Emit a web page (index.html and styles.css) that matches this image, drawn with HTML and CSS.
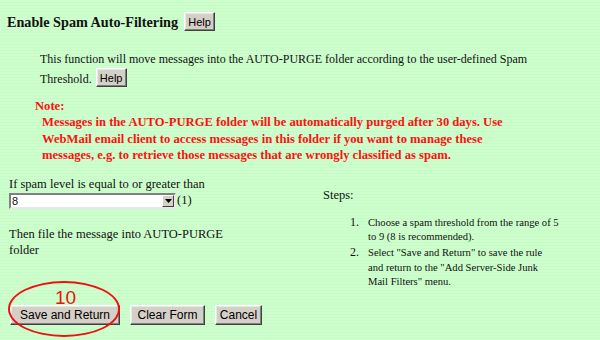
FILE: index.html
```html
<!DOCTYPE html>
<html>
<head>
<meta charset="utf-8">
<link rel="stylesheet" href="styles.css">
</head>
<body>
<div class="page">
  <div class="title-row">
    <h1 class="title">Enable Spam Auto-Filtering</h1>
    <button class="btn btn-help">Help</button>
  </div>
  <p class="intro">This function will move messages into the AUTO-PURGE folder according to the user-defined Spam<br>Threshold. <button class="btn btn-help">Help</button></p>
  <div class="note">
    <div class="note-label">Note:</div>
    <div class="note-body">Messages in the AUTO-PURGE folder will be automatically purged after 30 days. Use<br>WebMail email client to access messages in this folder if you want to manage these<br>messages, e.g. to retrieve those messages that are wrongly classified as spam.</div>
  </div>
  <div class="form-cols">
    <div class="left">
      <div class="cond">If spam level is equal to or greater than</div>
      <div class="select-row">
        <div class="select"><span class="select-val">8</span><span class="select-arrow"><svg width="7" height="4" viewBox="0 0 7 4"><path d="M0 0h7L3.5 4z" fill="#000"/></svg></span></div>
        <span class="ref">(1)</span>
      </div>
      <div class="then">Then file the message into AUTO-PURGE<br>folder</div>
    </div>
    <div class="right">
      <div class="steps-label">Steps:</div>
      <ol class="steps">
        <li>Choose a spam threshold from the range of 5<br>to 9 (8 is recommended).</li>
        <li>Select "Save and Return" to save the rule<br>and return to the "Add Server-Side Junk<br>Mail Filters" menu.</li>
      </ol>
    </div>
  </div>
  <div class="actions">
    <div class="annot-wrap">
      <button class="btn btn-action btn-save">Save and Return</button>
      <div class="annot"><span class="annot-num">10</span></div>
    </div>
    <button class="btn btn-action btn-clear">Clear Form</button>
    <button class="btn btn-action btn-cancel">Cancel</button>
  </div>
</div>
</body>
</html>
```

FILE: styles.css
```css
html, body {
  margin: 0;
  padding: 0;
}
body {
  background-color: #ccffcc;
  background-image: repeating-linear-gradient(to bottom, #ccffcc 0, #ccffcc 2px, #c9fbc9 2px, #c9fbc9 3px);
  font-family: "Liberation Serif", "Times New Roman", serif;
  color: #111;
  width: 600px;
  height: 340px;
  overflow: hidden;
}
.page {
  padding: 12px 0 0 7px;
}
.title-row {
  display: flex;
  align-items: center;
  gap: 6px;
  height: 19px;
}
.title {
  margin: 0;
  font-size: 14.2px;
  font-weight: bold;
  line-height: 19px;
  padding-top: 2px;
}
.btn {
  font-family: "Liberation Sans", Arial, sans-serif;
  background: #d4d0c8;
  color: #000;
  border: 1px solid;
  border-color: #ffffff #404040 #404040 #ffffff;
  box-shadow: inset -1px -1px 0 #808080, inset 1px 1px 0 #e8e8e8;
  padding: 0;
  margin: 0;
}
.btn-help {
  width: 31px;
  height: 19px;
  font-size: 11px;
}
.intro {
  margin: 20px 0 0 33px;
  font-size: 12px;
  line-height: 17px;
}
.intro .btn-help {
  vertical-align: 1px;
  margin-left: 1px;
}
.note {
  margin: 10px 0 0 28px;
  color: #ff1010;
  font-weight: bold;
  font-size: 12.6px;
  line-height: 16.5px;
}
.note-body {
  padding-left: 7px;
}
.form-cols {
  display: flex;
  margin-top: 12px;
  font-size: 12.5px;
}
.left {
  width: 314px;
  padding-left: 2px;
}
.cond {
  line-height: 16px;
}
.select-row {
  display: flex;
  align-items: center;
  gap: 1px;
  margin-top: 1px;
}
.select {
  width: 163px;
  height: 12px;
  background: #fff;
  border: 2px solid;
  border-color: #808080 #e8e8e8 #e8e8e8 #808080;
  display: flex;
  align-items: center;
  justify-content: space-between;
  font-family: "Liberation Sans", Arial, sans-serif;
  font-size: 11px;
}
.select-val {
  padding-left: 1px;
}
.select-arrow {
  width: 12px;
  height: 12px;
  background: #d4d0c8;
  box-sizing: border-box;
  border: 1px solid;
  border-color: #ffffff #404040 #404040 #ffffff;
  display: flex;
  align-items: center;
  justify-content: center;
}
.then {
  margin-top: 17px;
  line-height: 16px;
}
.right {
  padding-top: 11px;
}
.steps-label {
  line-height: 16px;
}
.steps {
  margin: 12px 0 0 0;
  padding-left: 39px;
  font-size: 10.6px;
  line-height: 14.7px;
}
.steps li {
  padding-left: 6px;
}
.steps li::marker {
  font-size: 12px;
}
.actions {
  display: flex;
  align-items: center;
  gap: 10px;
  margin-top: 15px;
  padding-left: 3px;
}
.btn-action {
  height: 20px;
  font-size: 12px;
}
.btn-save { width: 110px; }
.btn-clear { width: 75px; }
.btn-cancel { width: 47px; }
.annot-wrap {
  position: relative;
}
.annot {
  position: absolute;
  left: -2px;
  top: -24px;
  width: 112px;
  height: 56px;
  border: 2px solid #ee1111;
  border-radius: 50%;
  box-sizing: border-box;
  pointer-events: none;
}
.annot-num {
  position: absolute;
  left: 45px;
  top: 5px;
  color: #ee1111;
  font-family: "Liberation Sans", Arial, sans-serif;
  font-size: 19px;
  line-height: 19px;
}
```
